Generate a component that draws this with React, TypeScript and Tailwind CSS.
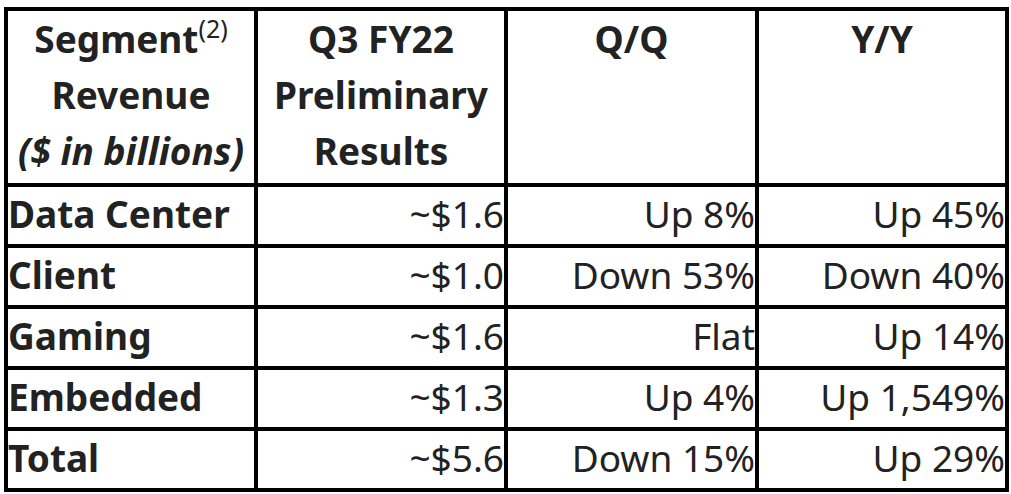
const rows = [
  { name: "Data Center", value: "~$1.6", qq: "Up 8%", yy: "Up 45%" },
  { name: "Client", value: "~$1.0", qq: "Down 53%", yy: "Down 40%" },
  { name: "Gaming", value: "~$1.6", qq: "Flat", yy: "Up 14%" },
  { name: "Embedded", value: "~$1.3", qq: "Up 4%", yy: "Up 1,549%" },
  { name: "Total", value: "~$5.6", qq: "Down 15%", yy: "Up 29%" },
];

export default function App() {
  return (
    <div className="h-[494px] w-[1011px] bg-white pl-1 pt-[7px] font-['Noto_Sans',sans-serif] text-[#222]">
      <div className="grid w-[1005px] grid-cols-[246px_246px_247px_246px] grid-rows-[172px_repeat(5,57px)] gap-1 bg-black p-1 text-[37px]">
        <div className="bg-white text-center font-bold leading-[56px]">
          <div>
            Segment<sup className="relative -top-[2px] align-super text-[25px] font-normal leading-none">(2)</sup>
          </div>
          <div>Revenue</div>
          <div className="italic">($ in billions)</div>
        </div>
        <div className="bg-white text-center font-bold leading-[56px]">
          <div>Q3 FY22</div>
          <div>Preliminary</div>
          <div>Results</div>
        </div>
        <div className="bg-white text-center font-bold leading-[56px]">Q/Q</div>
        <div className="bg-white text-center font-bold leading-[56px]">Y/Y</div>
        {rows.map((r) => (
          <div key={r.name} className="contents">
            <div className="flex items-center bg-white pb-[3px] font-bold">{r.name}</div>
            <div className="flex items-center justify-end bg-white pb-[3px]">{r.value}</div>
            <div className="flex items-center justify-end bg-white pb-[3px]">{r.qq}</div>
            <div className="flex items-center justify-end bg-white pb-[3px]">{r.yy}</div>
          </div>
        ))}
      </div>
    </div>
  );
}
